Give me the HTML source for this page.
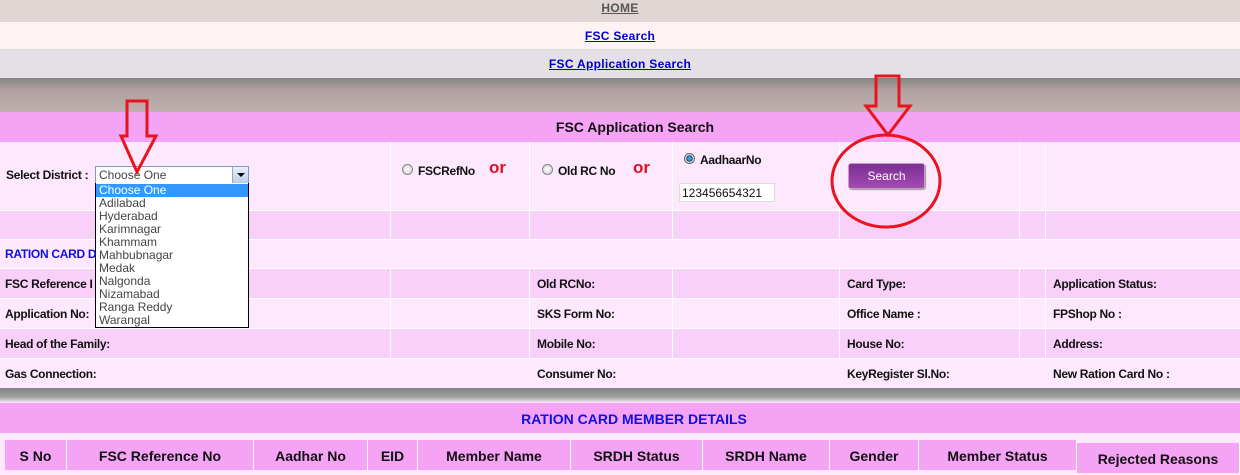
<!DOCTYPE html>
<html><head><meta charset="utf-8"><style>
*{margin:0;padding:0;box-sizing:border-box}
body{width:1240px;height:475px;overflow:hidden;background:#fde8fd;font-family:"Liberation Sans",Arial,sans-serif;position:relative}
.a{position:absolute}
.b{font-weight:bold;font-size:12px;color:#111;letter-spacing:-0.3px}
a{color:#00c;font-weight:bold;font-size:12px;letter-spacing:0.3px}
.vl{position:absolute;width:1px;background:#fff}
.hl{position:absolute;height:1px;background:#fff;left:0;width:1240px}
.opt{height:13px;line-height:13px;font-size:12px;color:#444;padding-left:3px}
.th{position:absolute;top:440px;height:30px;background:#f5a3f5;font-weight:bold;font-size:14px;color:#111;text-align:center;line-height:32px;border-right:1px solid #fff}
</style></head><body>
<div class="a" style="left:0;top:0;width:1240px;height:22px;background:#e0d7d5;text-align:center;line-height:16px"><a style="color:#555;text-decoration:underline">HOME</a></div>
<div class="a" style="left:0;top:22px;width:1240px;height:27px;background:#fdf3f3;text-align:center;line-height:28px"><a href="#">FSC Search</a></div>
<div class="a" style="left:0;top:49px;width:1240px;height:29px;background:#e5e0e5;border-top:1px solid #ddd;text-align:center;line-height:28px"><a href="#">FSC Application Search</a></div>
<div class="a" style="left:0;top:78px;width:1240px;height:34px;background:linear-gradient(#858585,#b0a2a2 35%,#c0afaf)"></div>
<div class="a" style="left:0;top:112px;width:1240px;height:30px;background:#f5a3f5;text-align:center;line-height:30px;font-weight:bold;font-size:14px;color:#111;padding-left:30px">FSC Application Search</div>
<div class="a" style="left:0;top:142px;width:1240px;height:68px;background:#fde8fd"></div>
<div class="a" style="left:0;top:210px;width:1240px;height:29px;background:#f9d0f9"></div>
<div class="a" style="left:0;top:268px;width:1240px;height:30px;background:#f9d0f9"></div>
<div class="a" style="left:0;top:328px;width:1240px;height:30px;background:#f9d0f9"></div>
<div class="hl" style="top:210px"></div><div class="hl" style="top:239px"></div>
<div class="hl" style="top:268px"></div><div class="hl" style="top:298px"></div>
<div class="hl" style="top:328px"></div><div class="hl" style="top:358px"></div>
<div class="vl" style="left:390px;top:142px;height:97px"></div>
<div class="vl" style="left:529px;top:142px;height:97px"></div>
<div class="vl" style="left:672px;top:142px;height:97px"></div>
<div class="vl" style="left:839px;top:142px;height:97px"></div>
<div class="vl" style="left:1019px;top:142px;height:97px"></div>
<div class="vl" style="left:1045px;top:142px;height:97px"></div>
<div class="vl" style="left:390px;top:268px;height:90px"></div>
<div class="vl" style="left:529px;top:268px;height:90px"></div>
<div class="vl" style="left:672px;top:268px;height:90px"></div>
<div class="vl" style="left:839px;top:268px;height:90px"></div>
<div class="vl" style="left:1019px;top:268px;height:90px"></div>
<div class="vl" style="left:1045px;top:268px;height:90px"></div>

<div class="a b" style="left:6px;top:168px">Select District :</div>
<div class="a" style="left:95px;top:166px;width:154px;height:18px;background:#fff;border:1px solid #7f9db9;font-size:12px;color:#444;padding-left:3px;line-height:16px">Choose One<div class="a" style="right:0;top:0;width:16px;height:16px;background:linear-gradient(#e8f0fb,#b9cdea);border-left:1px solid #9ab"><div class="a" style="left:4px;top:6px;border:4px solid transparent;border-top:4px solid #000"></div></div></div>
<div class="a" style="left:95px;top:183px;width:154px;height:145px;background:#fff;border:1px solid #000;border-top:0">
<div class="opt" style="background:#3399ff;color:#fff;margin-top:1px">Choose One</div>
<div class="opt">Adilabad</div><div class="opt">Hyderabad</div><div class="opt">Karimnagar</div><div class="opt">Khammam</div><div class="opt">Mahbubnagar</div><div class="opt">Medak</div><div class="opt">Nalgonda</div><div class="opt">Nizamabad</div><div class="opt">Ranga Reddy</div><div class="opt">Warangal</div>
</div>

<div class="a" style="left:402px;top:164px;width:11px;height:11px;border-radius:50%;border:1px solid #888;background:radial-gradient(#fff,#ccc)"></div>
<div class="a b" style="left:418px;top:164px">FSCRefNo</div>
<div class="a" style="left:489px;top:158px;color:#e01020;font-weight:bold;font-size:17px">or</div>
<div class="a" style="left:542px;top:164px;width:11px;height:11px;border-radius:50%;border:1px solid #888;background:radial-gradient(#fff,#ccc)"></div>
<div class="a b" style="left:558px;top:164px">Old RC No</div>
<div class="a" style="left:633px;top:158px;color:#e01020;font-weight:bold;font-size:17px">or</div>
<div class="a" style="left:684px;top:153px;width:11px;height:11px;border-radius:50%;border:1px solid #666;background:radial-gradient(#2a9fd8 30%,#135 45%,#ddd 55%)"></div>
<div class="a b" style="left:700px;top:153px">AadhaarNo</div>
<div class="a" style="left:679px;top:183px;width:96px;height:19px;background:#fff;border:1px solid #ddd;font-size:12px;line-height:18px;padding-left:2px;color:#111">123456654321</div>

<div class="a" style="left:848px;top:163px;width:77px;height:26px;border-radius:3px;background:linear-gradient(#7a3092,#a548b5);border:1px solid #c9b;box-shadow:1px 1px 1px #999;color:#fff;font-size:12px;text-align:center;line-height:24px">Search</div>

<div class="a" style="left:5px;top:247px;color:#1010e0;font-weight:bold;font-size:12px;letter-spacing:-0.3px">RATION CARD D</div>
<div class="a b" style="left:5px;top:277px">FSC Reference I</div>
<div class="a b" style="left:537px;top:277px">Old RCNo:</div>
<div class="a b" style="left:847px;top:277px">Card Type:</div>
<div class="a b" style="left:1053px;top:277px">Application Status:</div>
<div class="a b" style="left:5px;top:307px">Application No:</div>
<div class="a b" style="left:537px;top:307px">SKS Form No:</div>
<div class="a b" style="left:847px;top:307px">Office Name :</div>
<div class="a b" style="left:1053px;top:307px">FPShop No :</div>
<div class="a b" style="left:5px;top:337px">Head of the Family:</div>
<div class="a b" style="left:537px;top:337px">Mobile No:</div>
<div class="a b" style="left:847px;top:337px">House No:</div>
<div class="a b" style="left:1053px;top:337px">Address:</div>
<div class="a b" style="left:5px;top:367px">Gas Connection:</div>
<div class="a b" style="left:537px;top:367px">Consumer No:</div>
<div class="a b" style="left:847px;top:367px">KeyRegister Sl.No:</div>
<div class="a b" style="left:1053px;top:367px">New Ration Card No :</div>

<div class="a" style="left:0;top:388px;width:1240px;height:15px;background:linear-gradient(#858585,#a0a0a0 60%,#fde8fd)"></div>
<div class="a" style="left:0;top:403px;width:1240px;height:30px;background:#f5a3f5;text-align:center;line-height:32px;color:#1010e0;font-weight:bold;font-size:14px;padding-left:28px">RATION CARD MEMBER DETAILS</div>
<div class="th" style="left:5px;width:62px">S No</div>
<div class="th" style="left:67px;width:187px">FSC Reference No</div>
<div class="th" style="left:254px;width:114px">Aadhar No</div>
<div class="th" style="left:368px;width:50px">EID</div>
<div class="th" style="left:418px;width:153px">Member Name</div>
<div class="th" style="left:571px;width:132px">SRDH Status</div>
<div class="th" style="left:703px;width:127px">SRDH Name</div>
<div class="th" style="left:830px;width:89px">Gender</div>
<div class="th" style="left:919px;width:158px">Member Status</div>
<div class="th" style="left:1077px;width:163px;top:443px">Rejected Reasons</div>

<svg class="a" style="left:0;top:0" width="1240" height="475">
<g fill="none" stroke="#e8141e" stroke-width="3">
<path d="M127 101 H147 V136 H156 L137 172 L121 136 H127 Z"/>
<path d="M876 76 H899 V106 H910 L888 135 L866 106 H876 Z"/>
<ellipse cx="886" cy="181" rx="54" ry="46"/>
</g></svg>
</body></html>
